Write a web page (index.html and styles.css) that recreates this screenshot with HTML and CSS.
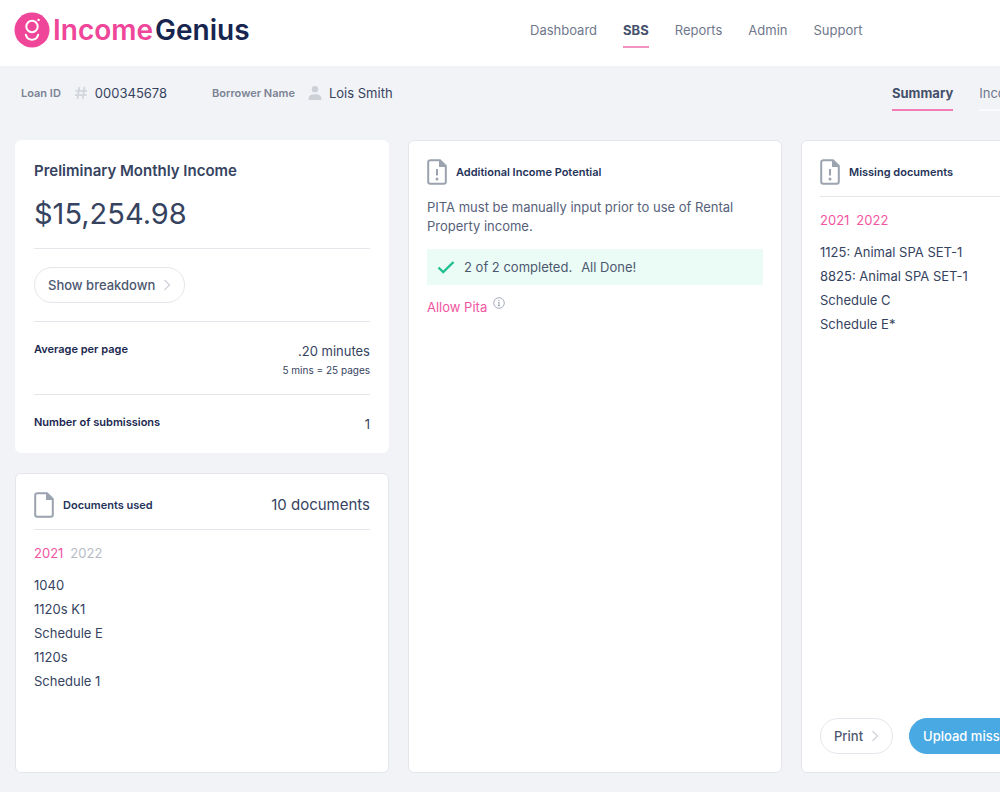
FILE: index.html
```html
<!DOCTYPE html>
<html lang="en">
<head>
<meta charset="utf-8">
<meta name="viewport" content="width=device-width, initial-scale=1">
<title>IncomeGenius – SBS Summary</title>
<link rel="stylesheet" href="styles.css">
</head>
<body>
<header class="topbar">
  <a class="brand" href="#">
    <svg class="brand-mark" viewBox="0 0 36 36" aria-hidden="true">
      <circle cx="18" cy="18" r="17.5" fill="#f0469a"/>
      <g fill="none" stroke="#fff" stroke-width="2">
        <circle cx="18" cy="14.500" r="5.700"/>
        <path d="M11.800 22.800c.9 3.200 3.300 5 6.200 5s5.300-1.800 6.200-5" stroke-linecap="round"/>
      </g>
      <circle cx="24.600" cy="7.900" r="1.200" fill="#fff"/>
    </svg>
    <span class="brand-first">Income</span><span class="brand-second">Genius</span>
  </a>
  <nav class="nav" aria-label="Main">
    <a class="nav-link" href="#">Dashboard</a>
    <a class="nav-link is-active" href="#">SBS</a>
    <a class="nav-link" href="#">Reports</a>
    <a class="nav-link" href="#">Admin</a>
    <a class="nav-link" href="#">Support</a>
  </nav>
</header>

<main class="page">
  <div class="subbar">
    <dl class="facts">
      <div class="fact">
        <dt>Loan ID</dt>
        <dd>
          <svg class="fact-icon" viewBox="0 0 14 14" aria-hidden="true"><path d="M5.300 1 3.500 13M10.500 1 8.700 13M1.500 4.800h11.500M1 9.200h11.500" fill="none" stroke="#d3d6dc" stroke-width="1.800"/></svg>
          000345678
        </dd>
      </div>
      <div class="fact">
        <dt>Borrower Name</dt>
        <dd>
          <svg class="fact-icon" viewBox="0 0 14 14" aria-hidden="true"><g fill="#cdd0d7"><circle cx="7" cy="3.300" r="3.200"/><path d="M.7 14v-1.500C.7 9.700 3 8.300 7 8.300s6.300 1.400 6.300 4.200V14z"/></g></svg>
          Lois Smith
        </dd>
      </div>
    </dl>
    <nav class="tabs" aria-label="Loan sections">
      <a class="tab is-active" href="#">Summary</a>
      <a class="tab" href="#">Income</a>
    </nav>
  </div>

  <div class="board">
    <div class="column">
      <section class="card card-plain">
        <h1 class="income-title">Preliminary Monthly Income</h1>
        <p class="income-amount">$15,254.98</p>
        <div class="breakdown">
          <button class="pill" type="button">Show breakdown
            <svg class="chevron" viewBox="0 0 8 12" aria-hidden="true"><path d="m1.500 1 5 5-5 5"/></svg>
          </button>
        </div>
        <div class="stat">
          <h2 class="stat-label">Average per page</h2>
          <p class="stat-value">.20 minutes<small>5 mins = 25 pages</small></p>
        </div>
        <div class="stat">
          <h2 class="stat-label">Number of submissions</h2>
          <p class="stat-value">1</p>
        </div>
      </section>

      <section class="card card-grow">
        <div class="card-head card-head-ruled">
          <svg class="doc-icon" viewBox="0 0 20 26" aria-hidden="true"><path d="M3 1.200h10l5.800 5.800v15.800a2 2 0 0 1-2 2H3.200a2 2 0 0 1-2-2V3.200a2 2 0 0 1 2-2z" class="doc-outline"/><path d="M12 1v7h7z" class="doc-fold"/></svg>
          <h2 class="card-title">Documents used</h2>
          <span class="doc-count">10 documents</span>
        </div>
        <p class="years"><a class="year" href="#">2021</a><a class="year is-muted" href="#">2022</a></p>
        <ul class="doc-list">
          <li>1040</li>
          <li>1120s K1</li>
          <li>Schedule E</li>
          <li>1120s</li>
          <li>Schedule 1</li>
        </ul>
      </section>
    </div>

    <section class="card">
      <div class="card-head">
        <svg class="doc-icon" viewBox="0 0 20 26" aria-hidden="true"><path d="M3 1.200h10l5.800 5.800v15.800a2 2 0 0 1-2 2H3.200a2 2 0 0 1-2-2V3.200a2 2 0 0 1 2-2z" class="doc-outline"/><path d="M12 1v7h7z" class="doc-fold"/><path d="M10 10v6.500" class="doc-mark"/><circle cx="10" cy="20" r="1.500" class="doc-fold"/></svg>
        <h2 class="card-title">Additional Income Potential</h2>
      </div>
      <p class="note">PITA must be manually input prior to use of Rental Property income.</p>
      <p class="done">
        <svg class="done-check" viewBox="0 0 18 14" aria-hidden="true"><path d="m1.500 7.500 4.700 4.500L16.500 2"/></svg>
        <span>2 of 2 completed.</span><span>All Done!</span>
      </p>
      <p class="allow">
        <a href="#">Allow Pita</a>
        <svg class="info-icon" viewBox="0 0 12 12" aria-hidden="true"><g fill="none" stroke="#9aa1b3"><circle cx="6" cy="6" r="5.300" stroke-width=".9"/><path d="M6 5.200v3.600M4.900 8.700h2.200M5 5.400h1" stroke-width="1"/></g><circle cx="6" cy="3.400" r=".7" fill="#9aa1b3"/></svg>
      </p>
    </section>

    <section class="card">
      <div class="card-head card-head-ruled">
        <svg class="doc-icon" viewBox="0 0 20 26" aria-hidden="true"><path d="M3 1.200h10l5.800 5.800v15.800a2 2 0 0 1-2 2H3.200a2 2 0 0 1-2-2V3.200a2 2 0 0 1 2-2z" class="doc-outline"/><path d="M12 1v7h7z" class="doc-fold"/><path d="M10 10v6.500" class="doc-mark"/><circle cx="10" cy="20" r="1.500" class="doc-fold"/></svg>
        <h2 class="card-title">Missing documents</h2>
      </div>
      <p class="years"><a class="year" href="#">2021</a><a class="year" href="#">2022</a></p>
      <ul class="doc-list">
        <li>1125: Animal SPA SET-1</li>
        <li>8825: Animal SPA SET-1</li>
        <li>Schedule C</li>
        <li>Schedule E*</li>
      </ul>
      <div class="actions">
        <button class="pill" type="button">Print
          <svg class="chevron" viewBox="0 0 8 12" aria-hidden="true"><path d="m1.500 1 5 5-5 5"/></svg>
        </button>
        <button class="pill pill-primary" type="button">Upload missing documents</button>
      </div>
    </section>
  </div>
</main>
</body>
</html>
```
FILE: styles.css
```css
:root {
  --ink: #36435f;
  --navy: #1b2850;
  --slate: #6f788c;
  --pink: #f0569f;
  --line: #e4e6ec;
  --surface: #f2f3f6;
}

* {
  box-sizing: border-box;
}

body {
  margin: 0;
  min-height: 100vh;
  padding-bottom: 4px;
  display: flex;
  flex-direction: column;
  overflow-x: hidden;
  background: #fff;
  color: var(--ink);
  font: 400 13px/20px Inter, "Liberation Sans", sans-serif;
}

h1, h2, p, ul, dl, dd {
  margin: 0;
}

a {
  color: inherit;
  text-decoration: none;
}

svg {
  flex: none;
}

/* Header */
.topbar {
  display: grid;
  grid-template-columns: 53% 1fr;
  align-items: center;
  height: 66px;
  padding-bottom: 6px;
}

.brand {
  display: flex;
  align-items: center;
  padding-left: 14px;
  font-size: 28px;
  font-weight: 600;
  line-height: 36px;
}

.brand-mark {
  width: 36px;
  height: 36px;
  margin-right: 3px;
}

.brand-first {
  color: #f0469a;
}

.brand-second {
  margin-left: 2px;
  color: #17254f;
}

.nav,
.tabs {
  display: flex;
  gap: 26px;
  color: var(--slate);
  white-space: nowrap;
}

.nav-link,
.tab {
  border-bottom: 2px solid transparent;
}

.nav-link {
  padding: 8px 0 6px;
}

.nav-link.is-active,
.tab.is-active {
  border-color: #f392c2;
  color: #44506b;
  font-weight: 700;
}

/* Loan summary bar */
.page {
  flex: 1;
  display: flex;
  flex-direction: column;
  padding-bottom: 19px;
  background: var(--surface);
}

.subbar {
  display: grid;
  grid-template-columns: 89% 1fr;
  padding: 17px 0 29px;
}

.facts {
  display: flex;
  gap: 45px;
  padding-left: 21px;
}

.fact {
  display: flex;
  gap: 13px;
}

.fact dt {
  color: #7b8395;
  font-size: 11px;
  font-weight: 600;
}

.fact dd {
  display: flex;
  align-items: center;
  gap: 7px;
  height: 20px;
}

.fact-icon {
  width: 14px;
  height: 14px;
}

.tabs {
  padding-left: 2px;
}

.tab {
  padding-bottom: 6px;
  border-color: #fafbfc;
}

.tab.is-active {
  border-color: #f27db6;
}

/* Cards */
.board {
  flex: 1;
  display: grid;
  grid-template-columns: repeat(3, 37.4vw);
  gap: 19px;
  padding-left: 15px;
}

.column {
  display: flex;
  flex-direction: column;
  gap: 20px;
}

.card {
  display: flex;
  flex-direction: column;
  padding: 18px;
  border: 1px solid var(--line);
  border-radius: 6px;
  background: #fff;
}

.card-plain {
  border-color: #fff;
}

.card-grow {
  flex: 1;
}

.income-title {
  font-size: 15px;
  font-weight: 600;
  line-height: 24px;
}

.income-amount {
  padding: 13px 0 16px;
  font-size: 29px;
  line-height: 36px;
}

.breakdown {
  padding: 18px 0;
  border-top: 1px solid var(--line);
}

.pill {
  display: inline-flex;
  align-items: center;
  gap: 8px;
  height: 36px;
  padding: 0 13px;
  border: 1px solid var(--line);
  border-radius: 18px;
  background: #fff;
  color: #4d5870;
  font: inherit;
  font-weight: 500;
  white-space: nowrap;
}

.pill-primary {
  border-color: #48a9e3;
  background: #48a9e3;
  color: #fff;
}

.chevron {
  width: 8px;
  height: 12px;
  fill: none;
  stroke: #cfd2da;
  stroke-width: 1.3;
}

.stat {
  display: flex;
  justify-content: space-between;
  padding: 19px 0 15px;
  border-top: 1px solid var(--line);
}

.stat:last-child {
  padding-bottom: 0;
}

.stat-label {
  color: var(--navy);
  font-size: 11px;
  font-weight: 600;
  line-height: 16px;
}

.stat-value {
  text-align: right;
}

.stat-value small {
  display: block;
  font-size: 10px;
  line-height: 18px;
}

.card-head {
  display: flex;
  align-items: center;
  gap: 9px;
}

.card-head-ruled {
  padding-bottom: 11px;
  border-bottom: 1px solid var(--line);
}

.card-title {
  color: #253359;
  font-size: 11px;
  font-weight: 600;
}

.doc-icon {
  width: 20px;
  height: 26px;
}

.doc-outline {
  fill: none;
  stroke: #9ba3af;
  stroke-width: 2;
}

.doc-fold {
  fill: #9ba3af;
}

.doc-mark {
  stroke: #9ba3af;
  stroke-width: 2;
}

.doc-count {
  margin-left: auto;
  font-size: 15px;
}

.years {
  display: flex;
  gap: 7px;
  padding: 13px 0 10px;
  color: var(--pink);
}

.year.is-muted {
  color: #b7bbc5;
}

.doc-list {
  padding: 0;
  line-height: 24px;
  list-style: none;
}

.note {
  padding: 13px 0;
  color: #56617a;
  line-height: 19px;
}

.done {
  display: flex;
  align-items: center;
  gap: 9px;
  height: 36px;
  padding-left: 10px;
  background: #eafcf5;
  color: #4d5870;
}

.done-check {
  width: 18px;
  height: 14px;
  fill: none;
  stroke: #1fc08f;
  stroke-width: 2.4;
}

.allow {
  display: flex;
  gap: 6px;
  padding-top: 12px;
  color: var(--pink);
}

.info-icon {
  width: 12px;
  height: 12px;
}

.actions {
  display: flex;
  gap: 16px;
  margin-top: auto;
}
```
